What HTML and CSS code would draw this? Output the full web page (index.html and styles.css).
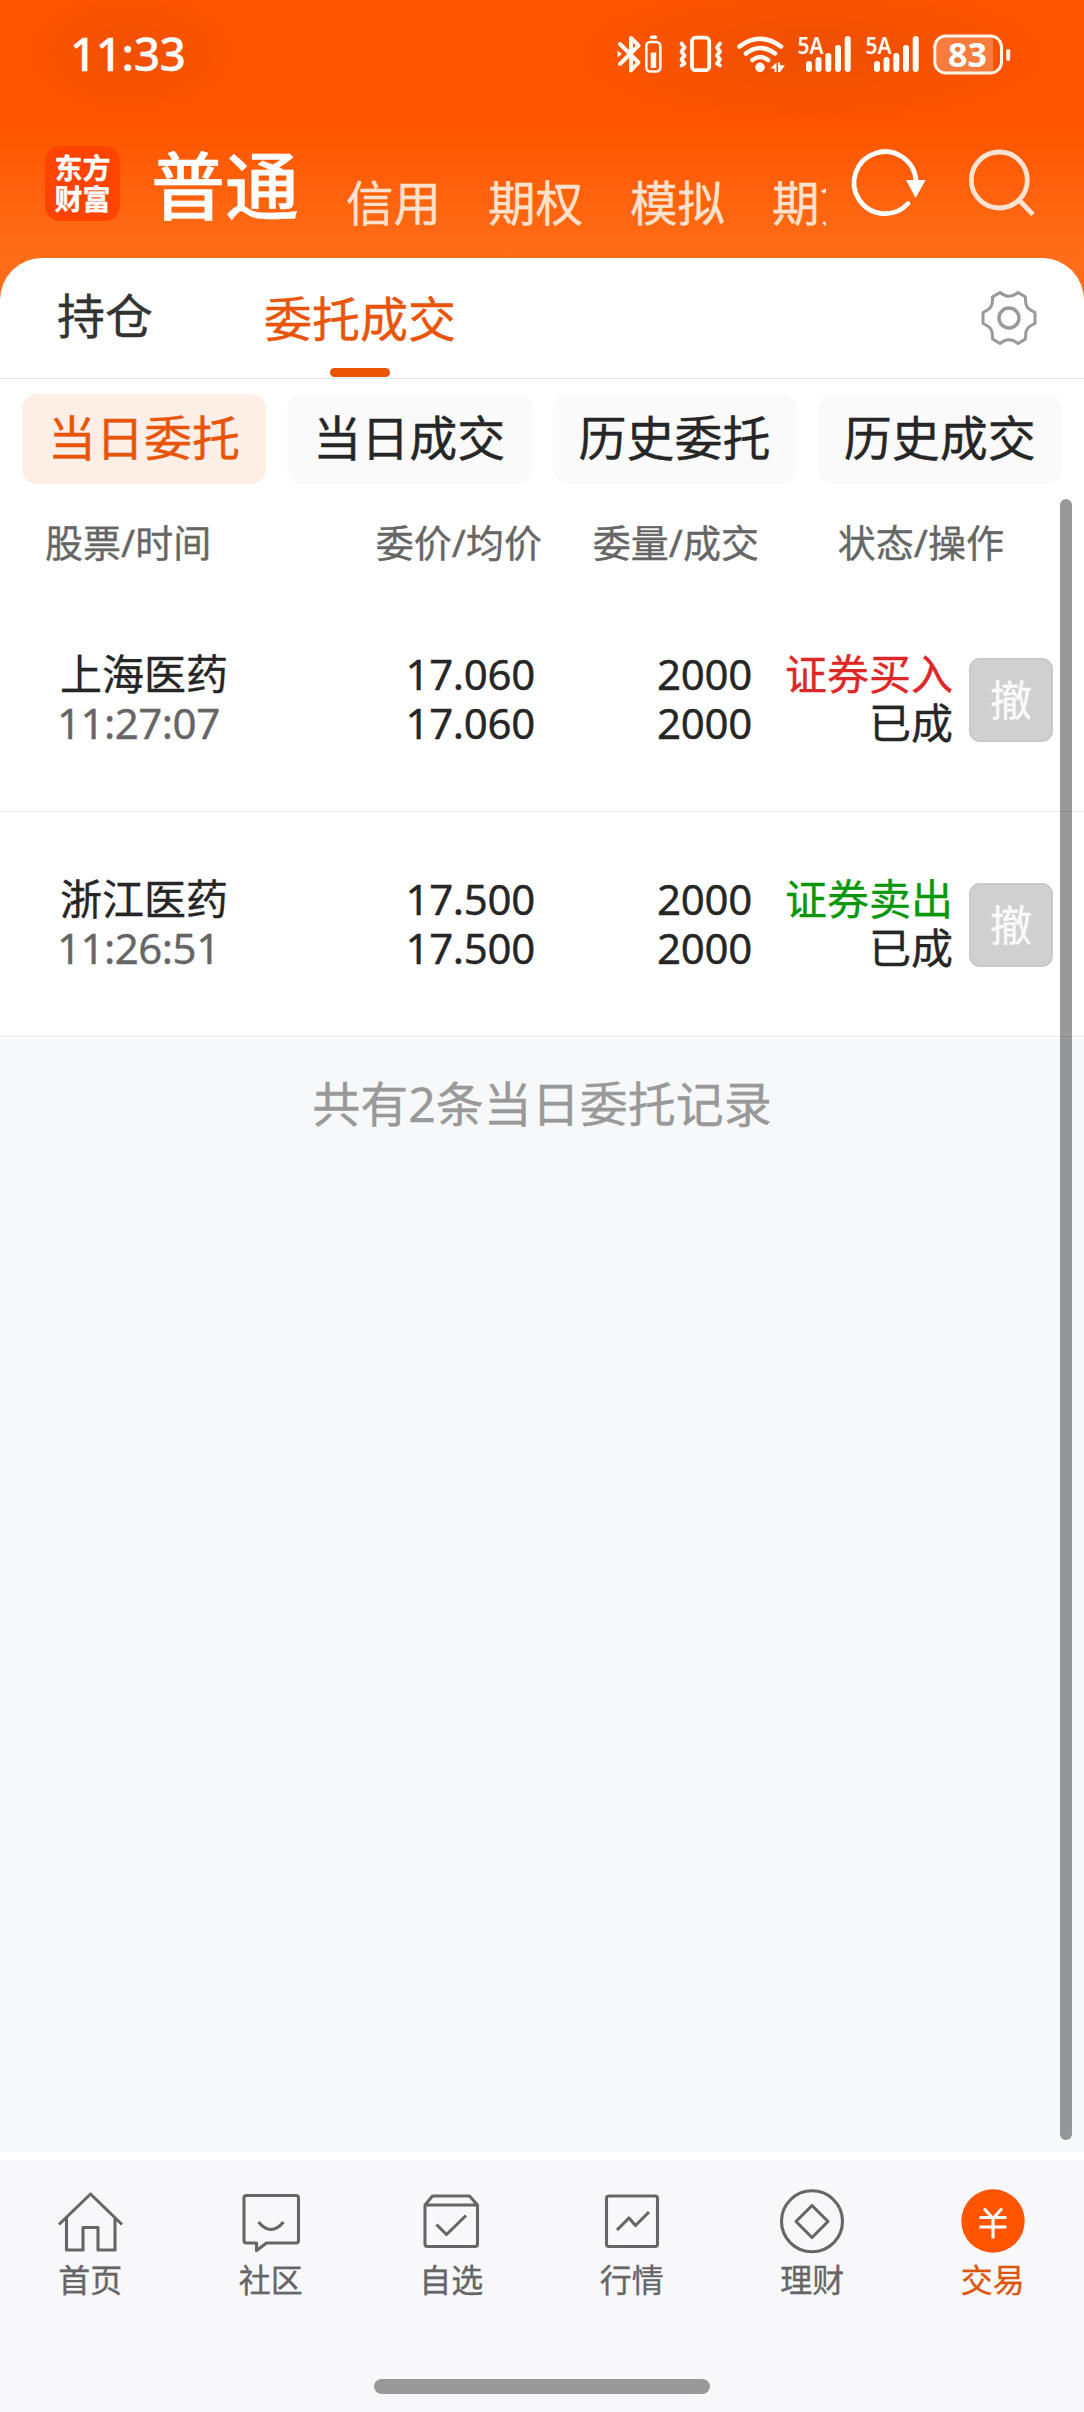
FILE: index.html
```html
<!DOCTYPE html>
<html lang="zh-CN">
<head>
<meta charset="utf-8">
<title>委托成交</title>
<link rel="stylesheet" href="styles.css">
</head>
<body>
<div class="page">
  <header class="top">
    <div class="status-bar">
      <span class="clock">11:33</span>
      <div class="status-icons">
        <svg width="55" height="50" viewBox="615 30 55 50" fill="none" stroke="#fffaf2" stroke-width="4" stroke-linejoin="round" stroke-linecap="round">
          <path d="M620 44l18.500 18.500-7.500 8V38l7.500 7.500L620 64"/>
          <path d="M617.500 50.500l4.500 3.500-4.500 3.500z" fill="#fffaf2" stroke="none"/>
          <rect x="646.300" y="42" width="14" height="29.500" rx="4" stroke-width="2.600"/>
          <path d="M651.500 37.300h4" stroke-width="3.400"/>
          <path d="M650.700 52.500h5.500v15.500h-5.500z" fill="#fffaf2" stroke="none"/>
        </svg>
        <svg width="60" height="50" viewBox="670 30 60 50" fill="none" stroke="#fffaf2" stroke-width="3.800" stroke-linejoin="round" stroke-linecap="round">
          <rect x="692" y="37.700" width="17.200" height="32.500" rx="3.500"/>
          <path d="M681.500 43.500l3 4-3 4 3 4-3 4 3 4-3 2M720 43.500l-3 4 3 4-3 4 3 4-3 4 3 2"/>
        </svg>
        <svg width="63" height="50" viewBox="730 30 63 50" fill="none" stroke="#fffaf2" stroke-width="4.600" stroke-linecap="round">
          <path d="M739.500 46.500Q760 31 781 46.500M746 53.500Q760 42.500 775 53.500M752.500 60Q760 54 768 60"/>
          <circle cx="760" cy="67.300" r="4.800" fill="#fffaf2" stroke="none"/>
          <path d="M770.300 68.500l6.200-6v9.500h-2v-3.500zM778 62.500h2v2.500l5 .500-5 6.500h-2z" fill="#fffaf2" stroke="none"/>
        </svg>
        <svg width="68" height="50" viewBox="793 30 68 50" fill="none" stroke="#fffaf2" stroke-width="6" stroke-linecap="round">
          <text class="net" x="797.500" y="54" textLength="26" lengthAdjust="spacingAndGlyphs">5A</text>
          <path d="M809 64v5M818.500 60v9M828.300 56v13M838 48v21M847.700 39v30"/>
        </svg>
        <svg width="68" height="50" viewBox="793 30 68 50" fill="none" stroke="#fffaf2" stroke-width="6" stroke-linecap="round">
          <text class="net" x="797.500" y="54" textLength="26" lengthAdjust="spacingAndGlyphs">5A</text>
          <path d="M809 64v5M818.500 60v9M828.300 56v13M838 48v21M847.700 39v30"/>
        </svg>
        <svg width="86" height="50" viewBox="929 30 86 50" fill="none" stroke="#fff3e8" stroke-width="3">
          <path d="M993 36v37h-48q-10 0-10-10v-17q0-10 10-10z" fill="#f97c3f" stroke="none"/>
          <rect x="934.800" y="36" width="66.700" height="37" rx="11"/>
          <path d="M1008.200 51v8" stroke-width="4" stroke-linecap="round"/>
          <text class="level" x="967.500" y="67" text-anchor="middle">83</text>
        </svg>
      </div>
    </div>
    <div class="nav">
      <div class="logo"><span>东方</span><span>财富</span></div>
      <h1 class="account">普通</h1>
      <nav class="accounts"><span>信用</span><span>期权</span><span>模拟</span><span>期货</span></nav>
      <svg class="refresh" width="76" height="76" viewBox="849 145 76 76" fill="none" stroke="#fff" stroke-width="4.800" stroke-linecap="round">
        <path d="M915 181a31 31 0 1 0-8 22.500"/>
        <path d="M905 180h19.600l-10 18z" fill="#fff" stroke="none"/>
      </svg>
      <svg class="search" width="70" height="76" viewBox="965 145 70 76" fill="none" stroke="#ffe3d2" stroke-width="4.800">
        <circle cx="998.300" cy="180" r="28"/>
        <path d="M1017.500 199.500l14.500 15"/>
      </svg>
    </div>
  </header>

  <main class="sheet">
    <div class="tabs">
      <span class="tab">持仓</span>
      <span class="tab tab-on">委托成交</span>
      <svg class="gear" width="56" height="56" viewBox="-28 -28 56 56" fill="none" stroke="#999" stroke-width="3" stroke-linejoin="round">
        <path d="M-9-25.500Q0-18 9-25.500L16.500-21C16-12 18-9 26-5.500V5.500C18 9 16 12 16.500 21L9 25.500Q0 18-9 25.500L-16.500 21C-16 12-18 9-26 5.500V-5.500C-18-9-16-12-16.500-21Z"/>
        <circle r="10" stroke-width="3.400"/>
      </svg>
    </div>
    <div class="pills">
      <span class="pill pill-on">当日委托</span>
      <span class="pill">当日成交</span>
      <span class="pill">历史委托</span>
      <span class="pill">历史成交</span>
    </div>
    <div class="thead"><span>股票/时间</span><span>委价/均价</span><span>委量/成交</span><span>状态/操作</span></div>
    <div class="row">
      <div class="cell name"><span>上海医药</span><span class="time">11:27:07</span></div>
      <div class="cell num"><span>17.060</span><span>17.060</span></div>
      <div class="cell num"><span>2000</span><span>2000</span></div>
      <div class="cell state"><span class="buy">证券买入</span><span>已成</span></div>
      <button class="cancel" type="button">撤</button>
    </div>
    <div class="row">
      <div class="cell name"><span>浙江医药</span><span class="time">11:26:51</span></div>
      <div class="cell num"><span>17.500</span><span>17.500</span></div>
      <div class="cell num"><span>2000</span><span>2000</span></div>
      <div class="cell state"><span class="sell">证券卖出</span><span>已成</span></div>
      <button class="cancel" type="button">撤</button>
    </div>
    <p class="summary">共有2条当日委托记录</p>
    <div class="scrollbar"></div>
  </main>

  <footer class="bottom">
    <nav class="tabbar">
      <a class="item">
        <svg width="68" height="68" viewBox="56 2187 68 68"><path d="M59 2224.500l31.500-30.500 31.500 30.500M66.500 2218v32h16.500v-22.500h15v22.500h17v-32"/></svg>
        <span>首页</span>
      </a>
      <a class="item">
        <svg width="68" height="68" viewBox="236.500 2187 68 68"><path d="M246 2195.500h49.500q2.500 0 2.500 2.500v42.500q0 2.500-2.500 2.500h-29.500l-10 7.500v-7.500h-10q-2.500 0-2.500-2.500v-42.500q0-2.500 2.500-2.500zM258 2222q12.500 15 25 0"/></svg>
        <span>社区</span>
      </a>
      <a class="item">
        <svg width="68" height="68" viewBox="417 2187 68 68"><path d="M425 2205v39q0 2.500 2.500 2.500h47.500q2.500 0 2.500-2.500v-39zl7.500-9h37l8 9M436.500 2224.500l10 10 19.500-19"/></svg>
        <span>自选</span>
      </a>
      <a class="item">
        <svg width="68" height="68" viewBox="598 2187 68 68"><rect x="606.500" y="2196" width="51" height="50.500" rx="2.500"/><path d="M617 2230l12-12 6.500 7.500 13.500-13.500"/></svg>
        <span>行情</span>
      </a>
      <a class="item">
        <svg width="68" height="68" viewBox="778.500 2187 68 68"><circle cx="812.500" cy="2221.300" r="30.500"/><path d="M812.500 2205.500l16 16-16 16-16-16z"/></svg>
        <span>理财</span>
      </a>
      <a class="item item-on">
        <svg width="68" height="68" viewBox="959.500 2187 68 68"><circle cx="993.500" cy="2221" r="31.700" fill="#ff5500" stroke="none"/><path stroke="#fff" d="M984.500 2208.500l9 10 9-10M993.500 2218v20.500M980 2217.500h27M980 2227h27"/></svg>
        <span>交易</span>
      </a>
    </nav>
    <div class="home-bar"></div>
  </footer>
</div>
</body>
</html>
```
FILE: styles.css
```css
* { box-sizing: border-box; }

body {
  margin: 0;
  background: #fff;
  color: #262626;
  font-family: "Noto Sans", "Noto Sans CJK SC", sans-serif;
  -webkit-text-stroke: .35px currentColor;
}

svg { display: block; flex: none; overflow: visible; }

.page {
  display: flex;
  flex-direction: column;
  width: 1084px;
  height: 2412px;
  overflow: hidden;
}

/* Orange header */
.top {
  flex: none;
  height: 310px;
  margin-bottom: -52px;
  background:
    radial-gradient(ellipse 110px 65px at 130px 52px, rgba(225, 75, 0, .55), rgba(225, 75, 0, 0)),
    radial-gradient(ellipse 250px 75px at 812px 54px, rgba(225, 75, 0, .6), rgba(225, 75, 0, 0)),
    linear-gradient(#ff5500 125px, #ff6d18 255px);
}

.status-bar {
  display: flex;
  justify-content: space-between;
  height: 108px;
  padding: 0 69px 0 70px;
}

.clock {
  color: #fff;
  font-size: 46px;
  font-weight: 500;
  letter-spacing: -.5px;
  line-height: 107px;
}

.status-icons { display: flex; margin-top: 30px; }

.net {
  fill: #fffaf2;
  stroke: none;
  font-size: 24px;
  font-weight: 600;
}

.level {
  fill: #fff;
  stroke: none;
  font-size: 34px;
  font-weight: 700;
}

.nav { display: flex; padding-left: 45px; }

.logo {
  display: flex;
  flex-direction: column;
  align-items: center;
  justify-content: center;
  width: 75px;
  height: 75px;
  margin-top: 38px;
  border-radius: 15px;
  background: #ff4300;
  color: #fff;
  font-size: 28px;
  font-weight: 700;
  line-height: 31px;
}

.account {
  margin: 28px 0 0 31px;
  color: #fff;
  font-size: 74px;
  font-weight: 500;
  line-height: 100px;
}

.accounts {
  display: flex;
  gap: 47px;
  width: 480px;
  margin: 60px 0 0 47px;
  overflow: hidden;
  color: #ffe1cd;
  font-size: 47.500px;
  line-height: 70px;
  white-space: nowrap;
}

.refresh { margin: 37px 0 0 24px; }
.search { margin: 37px 0 0 40px; }

/* White sheet */
.sheet {
  position: relative;
  flex: none;
  height: 1894px;
  border-radius: 42px 42px 0 0;
  background: linear-gradient(#fff 781px, #f7f8fa 781px);
}

.tabs {
  display: flex;
  align-items: flex-start;
  height: 121px;
  padding: 0 47px 0 57px;
  border-bottom: 1px solid #e3e3e3;
  font-size: 48px;
  line-height: 60px;
}

.tab { margin-top: 28px; color: #333; }

.tab-on {
  display: flex;
  flex-direction: column;
  align-items: center;
  margin: 31px auto 0 111px;
  color: #e85508;
}

.tab-on::after {
  width: 60px;
  height: 9px;
  margin-top: 19px;
  border-radius: 5px;
  background: #ea5504;
  content: "";
}

.gear { margin-top: 32px; }

.pills {
  display: grid;
  grid-template-columns: repeat(4, 1fr);
  gap: 21px;
  padding: 15px 22px 0;
}

.pill {
  height: 90px;
  border-radius: 15px;
  background: #fafafa;
  font-size: 48px;
  line-height: 87px;
  text-align: center;
}

.pill-on { background: #fdeee6; color: #e85508; }

/* Order table */
.thead {
  display: grid;
  grid-template-columns: 167px 330px 217px 245px;
  height: 103px;
  padding: 28px 0 0 45px;
  color: #666;
  font-size: 38px;
  line-height: 60px;
  text-align: right;
}

.thead span:first-child { text-align: left; }

.row {
  display: grid;
  grid-template-columns: 242px 234px 217px 201px 84px;
  align-items: center;
  height: 225px;
  padding-left: 59px;
  border-bottom: 1px solid #e8e8e8;
  font-size: 42px;
  line-height: 49px;
}

.cell {
  display: flex;
  flex-direction: column;
  margin-top: -2px;
  text-align: right;
}

.name { padding-left: 1px; text-align: left; }
.num { letter-spacing: -.3px; }

.time {
  margin-left: -3px;
  color: #666;
  letter-spacing: -.5px;
}

.buy { color: #dc2828; }
.sell { color: #0a980a; }

.cancel {
  width: 84px;
  height: 84px;
  margin: 1px 0 0 16px;
  padding: 0;
  border: 2px solid #c9c9c9;
  border-radius: 11px;
  background: #d0d0d0;
  color: #fafafa;
  font: inherit;
  line-height: 75px;
}

.summary {
  margin: 37px 0 0;
  color: #999;
  font-size: 48px;
  line-height: 60px;
  text-align: center;
}

.scrollbar {
  position: absolute;
  top: 241px;
  right: 12px;
  width: 12px;
  height: 1641px;
  border-radius: 6px;
  background: rgba(0, 0, 0, .4);
}

/* Bottom tab bar */
.bottom {
  flex: 1;
  border-top: 8px solid #fff;
  background: #f8f8fb;
}

.tabbar {
  display: grid;
  grid-template-columns: repeat(6, 1fr);
  margin-right: 1px;
}

.item {
  display: flex;
  flex-direction: column;
  align-items: center;
  padding-top: 27px;
  color: #666;
  font-size: 32px;
  line-height: 50px;
}

.item svg {
  fill: none;
  stroke: #666;
  stroke-width: 3.100;
  stroke-linejoin: round;
}

.item-on { color: #dd5510; }

.home-bar {
  width: 336px;
  height: 15px;
  margin: 74px auto 0;
  border-radius: 8px;
  background: #999;
}
```
